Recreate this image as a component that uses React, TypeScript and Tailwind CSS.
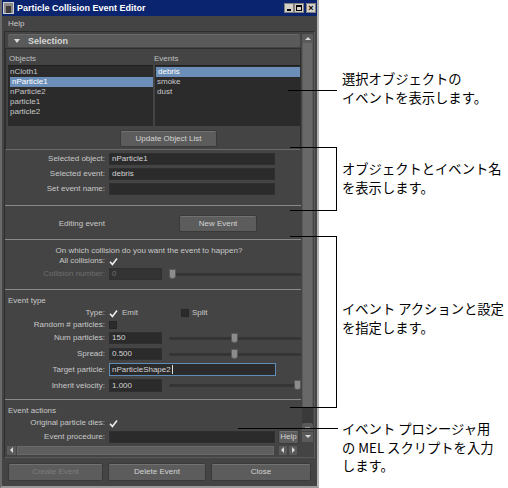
import React from 'react';

function Check() {
  return (
    <svg width="9" height="9" viewBox="0 0 9 9" className="block">
      <path d="M1 4.8 L3.4 7.4 L8 1.4" stroke="#ececec" strokeWidth="1.6" fill="none" />
    </svg>
  );
}

function Box() {
  return <div className="w-[8px] h-[8px] bg-[#2b2b2b] border border-[#262626]" />;
}

function Field({ w, text, focus }: { w: number; text?: string; focus?: boolean }) {
  return (
    <div
      className={
        'h-full bg-[#2b2b2b] text-[#d4d4d4] pl-[2px] flex items-center leading-none border ' +
        (focus ? 'border-[#5f8db8]' : 'border-[#2f2f2f]')
      }
      style={{ width: w }}
    >
      {text}
      {focus && <span className="w-px h-[9px] bg-[#e0e0e0] ml-px" />}
    </div>
  );
}

function Slider({ pos }: { pos: number }) {
  return (
    <div className="relative ml-[4px] h-full w-[133px] flex items-center">
      <div className="h-[3px] w-full rounded-full bg-[#353535]" />
      <div
        className="absolute top-[1px] w-[7px] h-[10px] bg-[#8c8c8c] border border-[#5a5a5a] rounded-b-[3px]"
        style={{ left: pos }}
      />
    </div>
  );
}

function Label({ children, dim }: { children: React.ReactNode; dim?: boolean }) {
  return (
    <div className={'w-[101px] pr-[1px] text-right shrink-0 ' + (dim ? 'text-[#6e6e6e]' : 'text-[#c8c8c8]')}>
      {children}
    </div>
  );
}

function Row({ h, mt, children }: { h: number; mt: number; children: React.ReactNode }) {
  return (
    <div className="flex items-center gap-[3px]" style={{ height: h, marginTop: mt }}>
      {children}
    </div>
  );
}

function Sep({ mt }: { mt: number }) {
  return (
    <div style={{ marginTop: mt }}>
      <div className="h-px bg-[#8a8a8a]" />
    </div>
  );
}

function Btn({ w, children, dim }: { w: number; children: React.ReactNode; dim?: boolean }) {
  return (
    <div
      className={
        'h-full flex items-center justify-center bg-[#5c5c5c] border border-[#3a3a3a] rounded-[2px] shadow-[inset_0_1px_0_#717171] ' +
        (dim ? 'text-[#7c7c7c]' : 'text-[#d4d4d4]')
      }
      style={{ width: w }}
    >
      {children}
    </div>
  );
}

function Arrow({ dir }: { dir: 'up' | 'down' | 'left' | 'right' }) {
  const d = {
    up: 'M1 5 L4 2 L7 5 Z',
    down: 'M1 2 L4 5 L7 2 Z',
    left: 'M5 1 L2 4 L5 7 Z',
    right: 'M3 1 L6 4 L3 7 Z',
  }[dir];
  return (
    <svg width="8" height="8" viewBox="0 0 8 8" className="block">
      <path d={d} fill="#d8d8d8" />
    </svg>
  );
}

const objects = ['nCloth1', 'nParticle1', 'nParticle2', 'particle1', 'particle2'];
const events = ['debris', 'smoke', 'dust'];

function Editor() {
  return (
    <div className="w-[319px] h-[488px] bg-[#444444] border-l-[2px] border-r-[2px] border-b-[2px] border-l-[#6a6a6a] border-r-[#b4b4b4] border-b-[#9a9a9a] flex flex-col font-['Liberation_Sans',Arial,sans-serif] text-[8px] leading-none select-none">
      {/* title bar */}
      <div className="h-[16px] bg-[#0b2470] flex items-center pl-[1px] pr-[1px]">
        <div className="w-[11px] h-[12px] bg-[#8a8a8a] border border-[#cfcfcf] flex items-end justify-center">
          <div className="w-[5px] h-[7px] bg-[#3c3c3c]" />
        </div>
        <div className="ml-[3px] text-white font-bold text-[9px]">Particle Collision Event Editor</div>
        <div className="ml-auto flex items-center">
          <div className="w-[10px] h-[10px] bg-[#d4d0c8] border border-[#808080] flex items-end justify-center pb-[1px]">
            <div className="w-[4px] h-[2px] bg-black" />
          </div>
          <div className="w-[10px] h-[10px] bg-[#d4d0c8] border border-[#808080] flex items-center justify-center">
            <div className="w-[6px] h-[6px] border border-black border-t-[2px]" />
          </div>
          <div className="ml-[2px] w-[10px] h-[10px] bg-[#d4d0c8] border border-[#808080] flex items-center justify-center text-black text-[9px] font-bold">
            ×
          </div>
        </div>
      </div>
      {/* menu */}
      <div className="h-[15px] flex items-center pl-[6px] text-[#c8c8c8]">Help</div>
      {/* frame */}
      <div className="ml-[2px] w-[311px] h-[427px] border border-[#2e2e2e] border-r-[#5a5a5a] border-b-[#5a5a5a] flex">
        <div className="w-[296px] flex flex-col">
          {/* header */}
          <div className="mt-[2px] ml-[3px] w-[292px] h-[13px] bg-[#5a5a5a] rounded-[2px] flex items-center pl-[6px] border-t border-[#686868]">
            <svg width="6" height="5" viewBox="0 0 6 5" className="block">
              <path d="M0 0 L6 0 L3 4 Z" fill="#dcdcdc" />
            </svg>
            <span className="ml-[8px] font-bold text-[9px] text-[#d6d6d6]">Selection</span>
          </div>
          {/* selection frame */}
          <div className="mt-[1px] h-[102px] border border-[#2f2f2f] border-b-[#6a6a6a] flex flex-col">
            <div className="mt-[4px] h-[11px] flex items-center text-[#c0c0c0]">
              <div className="w-[148px] pl-[3px]">Objects</div>
              <div>Events</div>
            </div>
            <div className="mt-[1px] h-[61px] flex gap-[2px] pl-[2px]">
              <div className="w-[145px] h-full bg-[#2b2b2b] border-t border-[#1f1f1f] pt-px">
                {objects.map((o, i) => (
                  <div
                    key={o}
                    className={
                      'h-[10px] flex items-center pl-[2px] ' +
                      (i === 1 ? 'bg-[#6b8fb9] text-white ml-[2px]' : 'text-[#c8c8c8]')
                    }
                  >
                    {o}
                  </div>
                ))}
              </div>
              <div className="w-[145px] h-full bg-[#2b2b2b] border-t border-[#1f1f1f] pt-px">
                {events.map((o, i) => (
                  <div
                    key={o}
                    className={
                      'h-[10px] flex items-center pl-[2px] ' +
                      (i === 0 ? 'bg-[#6b8fb9] text-white ml-px' : 'text-[#c8c8c8]')
                    }
                  >
                    {o}
                  </div>
                ))}
              </div>
            </div>
            <div className="mt-[4px] h-[17px] ml-[114px]">
              <Btn w={97}>Update Object List</Btn>
            </div>
          </div>

          <Row h={12} mt={3}>
            <Label>Selected object:</Label>
            <Field w={166} text="nParticle1" />
          </Row>
          <Row h={12} mt={3}>
            <Label>Selected event:</Label>
            <Field w={166} text="debris" />
          </Row>
          <Row h={12} mt={3}>
            <Label>Set event name:</Label>
            <Field w={166} />
          </Row>

          <Sep mt={10} />

          <div className="mt-[9px] h-[17px] flex items-center">
            <div className="w-[101px] text-right text-[#c8c8c8] pr-[1px]">Editing event</div>
            <div className="ml-[73px] h-full">
              <Btn w={78}>New Event</Btn>
            </div>
          </div>

          <Sep mt={7} />

          <div className="mt-[6px] h-[10px] flex items-center justify-center text-[#c8c8c8] pr-[8px]">
            On which collision do you want the event to happen?
          </div>
          <Row h={10} mt={0}>
            <Label>All collisions:</Label>
            <Check />
          </Row>
          <Row h={12} mt={2}>
            <Label dim>Collision number:</Label>
            <div className="h-full w-[54px] bg-[#333333] border border-[#303030] text-[#6e6e6e] flex items-center pl-[2px]">0</div>
            <Slider pos={0} />
          </Row>

          <Sep mt={9} />

          <div className="mt-[6px] h-[10px] flex items-center pl-[3px] text-[#c8c8c8]">Event type</div>
          <Row h={10} mt={2}>
            <Label>Type:</Label>
            <Check />
            <span className="text-[#c8c8c8] ml-px">Emit</span>
            <div className="ml-[40px]">
              <Box />
            </div>
            <span className="text-[#c8c8c8]">Split</span>
          </Row>
          <Row h={10} mt={2}>
            <Label>Random # particles:</Label>
            <Box />
          </Row>
          <Row h={12} mt={2}>
            <Label>Num particles:</Label>
            <Field w={54} text="150" />
            <Slider pos={62} />
          </Row>
          <Row h={12} mt={4}>
            <Label>Spread:</Label>
            <Field w={54} text="0.500" />
            <Slider pos={62} />
          </Row>
          <Row h={13} mt={3}>
            <Label>Target particle:</Label>
            <Field w={167} text="nParticleShape2" focus />
          </Row>
          <Row h={13} mt={3}>
            <Label>Inherit velocity:</Label>
            <Field w={54} text="1.000" />
            <Slider pos={125} />
          </Row>

          <Sep mt={7} />

          <div className="mt-[6px] h-[10px] flex items-center pl-[3px] text-[#c8c8c8]">Event actions</div>
          <Row h={10} mt={2}>
            <Label>Original particle dies:</Label>
            <Check />
          </Row>
          <Row h={14} mt={2}>
            <Label>Event procedure:</Label>
            <div className="h-[12px]">
              <Field w={166} />
            </div>
            <div className="h-full">
              <Btn w={21}>Help</Btn>
            </div>
          </Row>

          {/* horizontal scrollbar */}
          <div className="mt-[1px] h-[10px] flex items-center pl-[2px] gap-[1px]">
            <div className="w-[9px] h-[9px] bg-[#5a5a5a] flex items-center justify-center">
              <Arrow dir="left" />
            </div>
            <div className="w-[257px] h-[9px] bg-[#5e5e5e] border border-[#6a6a6a] flex items-center justify-center">
              <div className="w-[10px] h-[5px] bg-[radial-gradient(#9a9a9a_0.6px,transparent_0.7px)] bg-[length:2px_2px]" />
            </div>
            <div className="ml-[4px] w-[8px] h-[9px] bg-[#5a5a5a] flex items-center justify-center">
              <Arrow dir="left" />
            </div>
            <div className="ml-px w-[8px] h-[9px] bg-[#5a5a5a] flex items-center justify-center">
              <Arrow dir="right" />
            </div>
          </div>
        </div>

        {/* vertical scrollbar */}
        <div className="ml-px w-[11px] flex flex-col pt-[2px]">
          <div className="h-[9px] bg-[#5a5a5a] flex items-center justify-center">
            <Arrow dir="up" />
          </div>
          <div className="h-[364px] bg-[#686868] border-x border-[#5a5a5a] flex items-center justify-center">
            <div className="w-[6px] h-[12px] bg-[radial-gradient(#999_0.6px,transparent_0.7px)] bg-[length:2px_2px]" />
          </div>
          <div className="h-[16px] bg-[#3a3a3a] bg-[radial-gradient(#4c4c4c_0.6px,transparent_0.7px)] bg-[length:2px_2px]" />
          <div className="h-[8px] bg-[#5a5a5a] flex items-center justify-center rounded-t-[3px]">
            <div className="w-[5px] h-px bg-[#9a9a9a]" />
          </div>
          <div className="mt-px h-[10px] bg-[#5a5a5a] flex items-center justify-center">
            <Arrow dir="down" />
          </div>
        </div>
      </div>

      {/* bottom buttons */}
      <div className="mt-[5px] h-[18px] flex gap-[5px] pl-[6px]">
        <Btn w={95} dim>
          Create Event
        </Btn>
        <Btn w={98}>Delete Event</Btn>
        <Btn w={100}>Close</Btn>
      </div>
    </div>
  );
}

function Note({ top, lines }: { top: number; lines: string[] }) {
  return (
    <div className="absolute left-[342px] text-black text-[13.3px] leading-[18.5px]" style={{ top }}>
      {lines.map((l) => (
        <div key={l} className="whitespace-nowrap">
          {l}
        </div>
      ))}
    </div>
  );
}

function Line({ x, y, w, h }: { x: number; y: number; w: number; h: number }) {
  return <div className="absolute bg-black" style={{ left: x, top: y, width: w, height: h }} />;
}

export default function App() {
  return (
    <div className="relative w-[508px] h-[488px] bg-white overflow-hidden font-['Noto_Sans_CJK_JP','Noto_Sans',sans-serif]">
      <Editor />

      {/* callouts */}
      <Line x={288} y={90} w={49} h={1} />

      <Line x={290} y={147} w={47} h={1} />
      <Line x={336} y={147} w={1} h={64} />
      <Line x={290} y={210} w={47} h={1} />

      <Line x={290} y={236} w={47} h={1} />
      <Line x={336} y={236} w={1} h={172} />
      <Line x={290} y={407} w={47} h={1} />

      <Line x={238} y={428} w={100} h={1} />

      <Note top={70} lines={['選択オブジェクトの', 'イベントを表示します。']} />
      <Note top={160} lines={['オブジェクトとイベント名', 'を表示します。']} />
      <Note top={300} lines={['イベント アクションと設定', 'を指定します。']} />
      <Note top={420} lines={['イベント プロシージャ用', 'の MEL スクリプトを入力', 'します。']} />
    </div>
  );
}
